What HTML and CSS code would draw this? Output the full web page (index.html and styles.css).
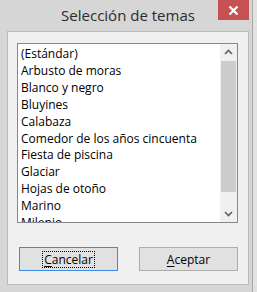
FILE: index.html
```html
<!DOCTYPE html>
<html lang="es">
<head>
<meta charset="utf-8">
<title>Selección de temas</title>
<link rel="stylesheet" href="styles.css">
</head>
<body>
<div class="window">
  <div class="titlebar">
    <span class="title">Selección de temas</span>
    <div class="close">
      <svg width="11" height="11" viewBox="0 0 11 11"><path d="M1.5 1.5 L9.5 9.5 M9.5 1.5 L1.5 9.5" stroke="#fff" stroke-width="2.2" fill="none"/></svg>
    </div>
  </div>
  <div class="client">
    <div class="listbox">
      <ul class="items">
        <li>(Estándar)</li>
        <li>Arbusto de moras</li>
        <li>Blanco y negro</li>
        <li>Bluyines</li>
        <li>Calabaza</li>
        <li>Comedor de los años cincuenta</li>
        <li>Fiesta de piscina</li>
        <li>Glaciar</li>
        <li>Hojas de otoño</li>
        <li>Marino</li>
        <li>Milenio</li>
      </ul>
      <div class="scrollbar">
        <div class="arrow">
          <svg width="9" height="6" viewBox="0 0 9 6"><path d="M1 5 L4.5 1.5 L8 5" stroke="#606060" stroke-width="1.6" fill="none"/></svg>
        </div>
        <div class="track"><div class="thumb"></div></div>
        <div class="arrow">
          <svg width="9" height="6" viewBox="0 0 9 6"><path d="M1 1 L4.5 4.5 L8 1" stroke="#606060" stroke-width="1.6" fill="none"/></svg>
        </div>
      </div>
    </div>
    <div class="buttons">
      <button class="btn default"><span class="focus"><u>C</u>ancelar</span></button>
      <button class="btn"><u>A</u>ceptar</button>
    </div>
  </div>
</div>
</body>
</html>
```
FILE: styles.css
```css
html, body {
  margin: 0;
  padding: 0;
}
body {
  width: 257px;
  height: 292px;
  overflow: hidden;
  font-family: "Open Sans", "Noto Sans", sans-serif;
  background: #e2e2e2;
}
.window {
  width: 253px;
  height: 292px;
  background: #d6d6d6;
  box-sizing: border-box;
  border-right: 1px solid #a8a8a8;
}
.titlebar {
  height: 31px;
  display: flex;
  justify-content: center;
  align-items: flex-start;
  position: relative;
  padding-left: 4px;
}
.title {
  font-size: 15px;
  line-height: 15px;
  margin-top: 8px;
  color: #2b2b2b;
}
.close {
  position: absolute;
  top: 0;
  left: 218px;
  width: 31px;
  height: 20px;
  background: #c75050;
  display: flex;
  align-items: center;
  justify-content: center;
}
.client {
  margin-left: 7px;
  width: 242px;
  height: 254px;
  box-sizing: border-box;
  border: 1px solid #b9b9b9;
  background: #f0f0f0;
  padding: 11px 0 0 9px;
}
.listbox {
  width: 221px;
  height: 180px;
  box-sizing: border-box;
  border: 1px solid #828790;
  background: #fff;
  display: flex;
}
.items {
  list-style: none;
  margin: 0;
  padding: 2px 0 0 3px;
  flex: 1;
  overflow: hidden;
  font-size: 12px;
  line-height: 16.9px;
  color: #000;
}
.items li {
  white-space: nowrap;
}
.scrollbar {
  width: 17px;
  display: flex;
  flex-direction: column;
  background: #f0f0f0;
}
.arrow {
  height: 16px;
  display: flex;
  align-items: center;
  justify-content: center;
}
.track {
  flex: 1;
  padding: 1px 1px 0 1px;
}
.thumb {
  height: 131px;
  background: #cdcdcd;
}
.buttons {
  display: flex;
  gap: 21px;
  margin-top: 24px;
  padding-left: 2px;
}
.btn {
  width: 99px;
  height: 24px;
  box-sizing: border-box;
  border: 1px solid #adadad;
  background: #e1e1e1;
  font-family: "Open Sans", "Noto Sans", sans-serif;
  font-size: 12px;
  color: #000;
  padding: 0;
  display: flex;
  align-items: center;
  justify-content: center;
}
.btn.default {
  border-color: #3c8be5;
}
.focus {
  outline: 1px dotted #000;
  outline-offset: 0;
  line-height: 15px;
  padding: 0 1px;
}
.btn u {
  text-decoration-thickness: 1px;
  text-underline-offset: 2px;
}
```
